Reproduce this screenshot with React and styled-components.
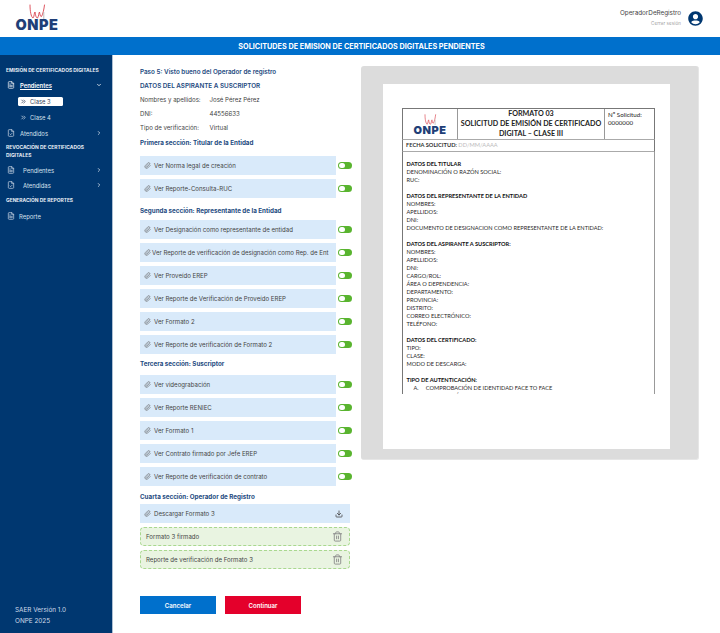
import React from "react";
import styled, { createGlobalStyle } from "styled-components";
import { ChevronDown, ChevronRight, ChevronsRight, Download, FileText, FileCheck, Paperclip, Trash2 } from "lucide-react";
import { FaUserCircle } from "react-icons/fa";

const Global = createGlobalStyle`
  html, body { margin: 0; padding: 0; background: #fff; }
  * { box-sizing: border-box; }
  body { font-family: "Inter", "Noto Sans", sans-serif; }
`;

const Page = styled.div`
  width: 720px; height: 633px; display: flex; flex-direction: column; overflow: hidden;
`;
const Header = styled.header`
  height: 37px; flex: none; display: flex; align-items: flex-start; justify-content: space-between;
  padding: 4px 17px 0 15px; background: #fff;
`;
const LogoWrap = styled.div`
  display: flex; flex-direction: column; align-items: center; width: ${p => p.$w}px;
`;
const LogoText = styled.span`
  font-family: "Inter", sans-serif; font-weight: 900; color: #1f3f78;
  font-size: ${p => p.$size}px; line-height: ${p => p.$lh}px; letter-spacing: ${p => p.$ls}px; white-space: nowrap;
`;
const LogoMark = styled.svg`
  display: block; flex: none;
`;
const User = styled.div`
  display: flex; align-items: center; gap: 7px; padding-top: 5px;
`;
const UserText = styled.div`
  display: flex; flex-direction: column; align-items: flex-end;
`;
const UserName = styled.span`
  font-size: 6.3px; line-height: 9px; color: #444;
`;
const Logout = styled.span`
  font-size: 4.4px; line-height: 8px; color: #9a9a9a; letter-spacing: 0.15px; margin-top: 2px;
`;
const Avatar = styled(FaUserCircle)`
  width: 15px; height: 15px; color: #003770;
`;
const TitleBar = styled.div`
  height: 18px; flex: none; background: #0070cc; color: #fff; display: flex; align-items: center; justify-content: center;
  font-weight: 700; font-size: 7.25px; padding-left: 3px;
`;
const Body = styled.div`
  flex: 1; display: flex; min-height: 0;
`;
const Sidebar = styled.aside`
  width: 112.5px; flex: none; background: #003770; color: #fff; display: flex; flex-direction: column; padding: 11px 0 6px 6px;
  border-right: 1px solid #aebfd2;
`;
const SideTitle = styled.div`
  font-size: 4.9px; line-height: 8px; font-weight: 700; color: #e6edf5; margin-top: ${p => p.$mt || 0}px; padding-right: 12px;
`;
const NavItem = styled.div`
  height: 14px; display: flex; align-items: center; font-size: 5.9px; color: ${p => p.$active ? "#fff" : "#d5e0ec"};
  font-weight: ${p => p.$active ? 600 : 400};
  margin-top: ${p => p.$mt || 0}px; margin-bottom: ${p => p.$mb || 0}px; padding-right: 10px;
  gap: ${p => p.$gap || 5}px; padding-left: 1px;
  svg { flex: none; }
`;
const NavLabel = styled.span`
  flex: 1; text-decoration: ${p => p.$underline ? "underline" : "none"};
`;
const SubRow = styled.div`
  height: 16px; display: flex; align-items: center; padding-left: 12px;
`;
const SubItem = styled.div`
  width: 44.5px; height: 9px; border-radius: 1.5px; display: flex; align-items: center; gap: 3px; padding-left: 2px;
  font-size: 5.8px; background: ${p => p.$active ? "#fff" : "transparent"}; color: ${p => p.$active ? "#333f5a" : "#d5e0ec"};
`;
const SideFooter = styled.div`
  margin-top: auto; padding-left: 9px; font-size: 6.4px; line-height: 11px; color: #cfdbe8;
`;
const Main = styled.main`
  flex: 1; display: flex; gap: 9px; align-items: flex-start; padding: 10px 0 0 27.5px;
`;
const Col = styled.div`
  width: 212px; flex: none; display: flex; flex-direction: column;
`;
const StepTitle = styled.div`
  font-size: 6.3px; line-height: 14px; font-weight: 600; color: #1d4a80;
`;
const InfoRow = styled.div`
  display: flex; font-size: 6.1px; line-height: 14px; color: #444;
`;
const InfoLabel = styled.span`
  width: 69.5px;
`;
const SectionTitle = styled.div`
  font-size: 6.25px; line-height: 12px; font-weight: 700; color: #1d4a80;
  margin-top: ${p => p.$mt}px; margin-bottom: ${p => p.$mb}px;
`;
const RowLine = styled.div`
  display: flex; align-items: center; gap: 2px; margin-bottom: 4px; margin-right: ${p => p.$mr || 0}px;
`;
const DocRow = styled.div`
  flex: 1; height: 19px; background: #d9eafa; display: flex; align-items: center; gap: ${p => p.$gap || 3}px;
  padding: 0 ${p => p.$pr || 0}px 0 ${p => p.$pl || 4}px; font-size: 6.1px; color: #444; white-space: nowrap;
`;
const Clip = styled(Paperclip)`
  width: 7px; height: 7px; color: #666; flex: none;
`;
const Toggle = styled.span`
  width: 14px; height: 7.5px; border-radius: 4px; background: #59b42f; flex: none; display: flex; align-items: center; padding-left: 1px;
  &::before { content: ""; width: 5.5px; height: 5.5px; border-radius: 50%; background: #fff; }
`;
const Push = styled.span`
  margin-left: auto; display: flex; color: #444;
`;
const FileRow = styled.div`
  height: 19px; border-radius: 4px; background: #e9f4e1; border: 1px dashed #a9d88f; display: flex; align-items: center;
  padding: 0 6px 0 5px; font-size: 6.1px; color: #444; margin: 0 2px 4px 0; justify-content: space-between;
`;
const TrashIcon = styled(Trash2)`
  width: 11px; height: 11px; color: #8a8a8a;
`;
const Actions = styled.div`
  display: flex; gap: 9px; margin-top: 23px;
`;
const Btn = styled.button`
  width: 76px; height: 18px; border: 0; padding: 0; color: #fff; font-family: inherit; font-size: 6.1px; font-weight: 600;
  background: ${p => p.$bg};
`;
const Viewer = styled.section`
  width: 338px; height: 394px; margin-top: 1px; background: #dcdcdc; border-radius: 3px; padding: 18px 28px 10px 22px; display: flex; border-right: 1px solid #e6e6e6; border-bottom: 1px solid #e6e6e6;
`;
const Sheet = styled.div`
  flex: 1; background: #fff; padding: 24px 15px 0 19px; display: flex; flex-direction: column;
`;
const DocHead = styled.div`
  height: 32px; flex: none; display: grid; grid-template-columns: 55px 147px 1fr; border: 1px solid #777; border-bottom: 1.5px solid #aaa;
`;
const HeadCell = styled.div`
  border-right: 1px solid #999; display: flex; flex-direction: column; align-items: center; justify-content: center; min-width: 0;
`;
const DocTitle = styled.div`
  font-family: "Lato", sans-serif; font-weight: 700; font-size: 7.15px; line-height: 10px; text-align: center; color: #222; white-space: nowrap;
`;
const NumCell = styled.div`
  font-family: "Lato", sans-serif; font-size: 6.2px; line-height: 7.5px; color: #333; padding: 2px 0 0 3px; font-weight: 500;
`;
const DateRow = styled.div`
  height: 11.5px; flex: none; border: 1px solid #777; border-top: 0; border-bottom: 1.5px solid #aaa; padding-left: 3px;
  font-family: "Lato", sans-serif; font-size: 5.7px; line-height: 9.5px; color: #333; font-weight: 700;
`;
const DateHint = styled.span`
  color: #bbb; font-weight: 400;
`;
const DocBody = styled.div`
  height: 242px; flex: none; border-left: 1px solid #777; border-right: 1.5px solid #999; padding: 8px 0 0 3.5px; overflow: hidden;
  font-family: "Lato", sans-serif; font-size: 5.65px; line-height: 8px; color: #222;
`;
const DocLine = styled.div`
  white-space: pre; font-weight: ${p => p.$b ? 700 : 400}; margin-top: ${p => p.$gap ? 8 : 0}px;
  padding-left: ${p => p.$indent ? 7 : 0}px; color: ${p => p.$b ? "#111" : "#2a2a2a"};
`;

const Logo = ({ w, h, size, lh, boxW, ls }) => (
  <LogoWrap $w={boxW}>
    <LogoMark width={w} height={h} viewBox="0 0 17 15" fill="none">
      <path d="M1 1C1 7 2 13 4 14C5.5 12 5 9 6 8C6.5 11 7 14 8.5 14C10 12 9.5 9 10.5 8C11 11 11.5 13 12.5 12.5C14 10 15 5 15.5 1" stroke="#d9434e" strokeWidth="0.9" strokeLinecap="round" />
      <path d="M14.8 8V15" stroke="#b5b5b5" strokeWidth="0.9" />
    </LogoMark>
    <LogoText $size={size} $lh={lh} $ls={ls}>ONPE</LogoText>
  </LogoWrap>
);

const docLines = [
  ["DATOS DEL TITULAR", 1], ["DENOMINACIÓN O RAZÓN SOCIAL:"], ["RUC:"],
  ["DATOS DEL REPRESENTANTE DE LA ENTIDAD", 1, 1], ["NOMBRES:"], ["APELLIDOS:"], ["DNI:"], ["DOCUMENTO DE DESIGNACION COMO REPRESENTANTE DE LA ENTIDAD:"],
  ["DATOS DEL ASPIRANTE A SUSCRIPTOR:", 1, 1], ["NOMBRES:"], ["APELLIDOS:"], ["DNI:"], ["CARGO/ROL:"], ["ÁREA O DEPENDENCIA:"], ["DEPARTAMENTO:"], ["PROVINCIA:"], ["DISTRITO:"], ["CORREO ELECTRÓNICO:"], ["TELÉFONO:"],
  ["DATOS DEL CERTIFICADO:", 1, 1], ["TIPO:"], ["CLASE:"], ["MODO DE DESCARGA:"],
  ["TIPO DE AUTENTICACIÓN:", 1, 1], ["A.     COMPROBACIÓN DE IDENTIDAD FACE TO FACE", 0, 0, 1], ["B.     VERIFICACIÓN A DISTANCIA", 0, 0, 1],
];

const Row = ({ children, gap, pl }) => (
  <RowLine>
    <DocRow $gap={gap} $pl={pl}><Clip />{children}</DocRow>
    <Toggle />
  </RowLine>
);

export default function App() {
  return (
    <Page>
      <Global />
      <Header>
        <Logo w={17} h={15} size={14.5} lh={12} boxW={44} ls={0.6} />
        <User>
          <UserText>
            <UserName>OperadorDeRegistro</UserName>
            <Logout>Cerrar sesión</Logout>
          </UserText>
          <Avatar />
        </User>
      </Header>
      <TitleBar>SOLICITUDES DE EMISION DE CERTIFICADOS DIGITALES PENDIENTES</TitleBar>
      <Body>
        <Sidebar>
          <SideTitle>EMISIÓN DE CERTIFICADOS DIGITALES</SideTitle>
          <NavItem $active $mt={4} $mb={1}><FileText size={8} /><NavLabel $underline>Pendientes</NavLabel><ChevronDown size={6} strokeWidth={3} /></NavItem>
          <SubRow><SubItem $active><ChevronsRight size={7} strokeWidth={2.5} />Clase 3</SubItem></SubRow>
          <SubRow><SubItem><ChevronsRight size={7} strokeWidth={2.5} />Clase 4</SubItem></SubRow>
          <NavItem $mt={1}><FileCheck size={8} /><NavLabel>Atendidos</NavLabel><ChevronRight size={6} strokeWidth={3} /></NavItem>
          <SideTitle $mt={3}>REVOCACIÓN DE CERTIFICADOS DIGITALES</SideTitle>
          <NavItem $mt={4} $gap={8}><FileText size={8} /><NavLabel>Pendientes</NavLabel><ChevronRight size={6} strokeWidth={3} /></NavItem>
          <NavItem $mt={1} $gap={8}><FileCheck size={8} /><NavLabel>Atendidas</NavLabel><ChevronRight size={6} strokeWidth={3} /></NavItem>
          <SideTitle $mt={4}>GENERACIÓN DE REPORTES</SideTitle>
          <NavItem $mt={5} $gap={4}><FileText size={8} /><NavLabel>Reporte</NavLabel></NavItem>
          <SideFooter>SAER Versión 1.0<br />ONPE 2025</SideFooter>
        </Sidebar>
        <Main>
          <Col>
            <StepTitle>Paso 5: Visto bueno del Operador de registro</StepTitle>
            <StepTitle>DATOS DEL ASPIRANTE A SUSCRIPTOR</StepTitle>
            <InfoRow><InfoLabel>Nombres y apellidos:</InfoLabel>José Pérez Pérez</InfoRow>
            <InfoRow><InfoLabel>DNI:</InfoLabel>44556633</InfoRow>
            <InfoRow><InfoLabel>Tipo de verificación:</InfoLabel>Virtual</InfoRow>
            <SectionTitle $mt={2} $mb={7}>Primera sección: Titular de la Entidad</SectionTitle>
            <Row>Ver Norma legal de creación</Row>
            <Row>Ver Reporte-Consulta-RUC</Row>
            <SectionTitle $mt={3} $mb={3}>Segunda sección: Representante de la Entidad</SectionTitle>
            <Row>Ver Designación como representante de entidad</Row>
            <Row gap={1.5} pl={3.5}>Ver Reporte de verificación de designación como Rep. de Ent</Row>
            <Row>Ver Proveído EREP</Row>
            <Row>Ver Reporte de Verificación de Proveído EREP</Row>
            <Row>Ver Formato 2</Row>
            <Row>Ver Reporte de verificación de Formato 2</Row>
            <SectionTitle $mt={0} $mb={5}>Tercera sección: Suscriptor</SectionTitle>
            <Row>Ver videograbación</Row>
            <Row>Ver Reporte RENIEC</Row>
            <Row>Ver Formato 1</Row>
            <Row>Ver Contrato firmado por Jefe EREP</Row>
            <Row>Ver Reporte de verificación de contrato</Row>
            <SectionTitle $mt={1} $mb={1}>Cuarta sección: Operador de Registro</SectionTitle>
            <RowLine $mr={2}>
              <DocRow $pr={7}><Clip />Descargar Formato 3<Push><Download size={8} strokeWidth={2.4} /></Push></DocRow>
            </RowLine>
            <FileRow>Formato 3 firmado<TrashIcon /></FileRow>
            <FileRow>Reporte de verificación de Formato 3<TrashIcon /></FileRow>
            <Actions>
              <Btn $bg="#0070cc">Cancelar</Btn>
              <Btn $bg="#e4002b">Continuar</Btn>
            </Actions>
          </Col>
          <Viewer>
            <Sheet>
              <DocHead>
                <HeadCell>
                  <Logo w={13} h={11} size={11} lh={10} boxW={36} ls={0.5} />
                </HeadCell>
                <HeadCell>
                  <DocTitle>FORMATO 03<br />SOLICITUD DE EMISIÓN DE CERTIFICADO<br />DIGITAL – CLASE III</DocTitle>
                </HeadCell>
                <NumCell>Nº Solicitud:<br />0000000</NumCell>
              </DocHead>
              <DateRow>FECHA SOLICITUD: <DateHint>DD/MM/AAAA</DateHint></DateRow>
              <DocBody>
                {docLines.map(([t, b, g, i], n) => (
                  <DocLine key={n} $b={b} $gap={g} $indent={i}>{t}</DocLine>
                ))}
              </DocBody>
            </Sheet>
          </Viewer>
        </Main>
      </Body>
    </Page>
  );
}
